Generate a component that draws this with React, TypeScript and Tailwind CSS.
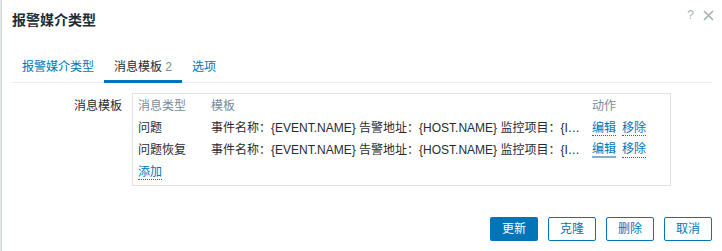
const font = "font-['Liberation_Sans','Noto_Sans_CJK_SC',sans-serif]";

const rows = [
  { type: '问题', tpl: '事件名称：{EVENT.NAME} 告警地址：{HOST.NAME} 监控项目：{ITEM.NAME} 监控取值：{ITEM.LASTVALUE}', hover: false },
  { type: '问题恢复', tpl: '事件名称：{EVENT.NAME} 告警地址：{HOST.NAME} 监控项目：{ITEM.NAME} 监控取值：{ITEM.LASTVALUE}', hover: true },
];

function Link({ children, hover = false }: { children: React.ReactNode; hover?: boolean }) {
  return (
    <span
      className={
        hover
          ? 'inline-block leading-[14px] text-[#0275b8] border-b-2 border-[#7fb0cf]'
          : 'inline-block leading-[14px] text-[#0275b8] border-b border-dotted border-[#0275b8]'
      }
    >
      {children}
    </span>
  );
}

export default function App() {
  return (
    <div className={`flex h-[251px] w-[722px] bg-white text-[12px] text-[#1f2c33] ${font}`}>
      {/* page edge behind the dialog */}
      <div className="w-[2px] bg-[#e3e8eb] border-r border-[#cfd6db]" />

      <div className="relative flex-1 pl-[9px] pr-[10px]">
        {/* Title */}
        <div className="flex h-[40px] items-center">
          <h1 className="text-[14px] font-bold leading-[18px] pl-[1px]">报警媒介类型</h1>
        </div>
        <div className="absolute right-[8px] top-[8px] flex items-center gap-[9px] text-[#a3b0b8]">
          <span className="text-[12px] leading-[14px]">?</span>
          <svg width="11" height="11" viewBox="0 0 11 11" stroke="currentColor" strokeWidth="1.6">
            <path d="M1 1 L10 10 M10 1 L1 10" />
          </svg>
        </div>

        {/* Tabs */}
        <div className="flex border-b border-[#ebeef0] pl-[1px]">
          <div className="-mb-px border-b-[3px] border-transparent px-[10px] pt-[20px] pb-[6px] leading-[14px] text-[#0275b8]">
            报警媒介类型
          </div>
          <div className="-mb-px border-b-[3px] border-[#0275b8] px-[10px] pt-[20px] pb-[6px] leading-[14px]">
            消息模板 <span className="text-[#768d99]">2</span>
          </div>
          <div className="-mb-px border-b-[3px] border-transparent px-[10px] pt-[20px] pb-[6px] leading-[14px] text-[#0275b8]">
            选项
          </div>
        </div>

        {/* Form */}
        <div className="mt-[10px] flex gap-[10px] pl-[1px]">
          <div className="flex h-[24px] w-[110px] items-center justify-end pt-[1px]">消息模板</div>
          <div className="w-[539px] border border-[#dfe4e7] px-[5px] pt-px pb-[2px]">
            <div className="grid h-[22px] grid-cols-[73px_381px_1fr] items-center text-[#768d99]">
              <span>消息类型</span>
              <span>模板</span>
              <span>动作</span>
            </div>
            {rows.map((r) => (
              <div key={r.type} className="grid h-[22px] grid-cols-[73px_381px_1fr] items-center">
                <span>{r.type}</span>
                <span className="truncate pr-[8px]">{r.tpl}</span>
                <span className="flex gap-[6px]">
                  <Link hover={r.hover}>编辑</Link>
                  <Link>移除</Link>
                </span>
              </div>
            ))}
            <div className="flex h-[22px] items-center">
              <Link>添加</Link>
            </div>
          </div>
        </div>

        {/* Buttons */}
        <div className="mt-[31px] flex justify-end gap-[10px]">
          <button className="h-[24px] w-[48px] rounded-[2px] bg-[#0275b8] text-white">更新</button>
          <button className="h-[24px] w-[48px] rounded-[2px] border border-[#0275b8] bg-white text-[#0275b8]">克隆</button>
          <button className="h-[24px] w-[48px] rounded-[2px] border border-[#0275b8] bg-white text-[#0275b8]">删除</button>
          <button className="h-[24px] w-[48px] rounded-[2px] border border-[#0275b8] bg-white text-[#0275b8]">取消</button>
        </div>
      </div>
    </div>
  );
}
